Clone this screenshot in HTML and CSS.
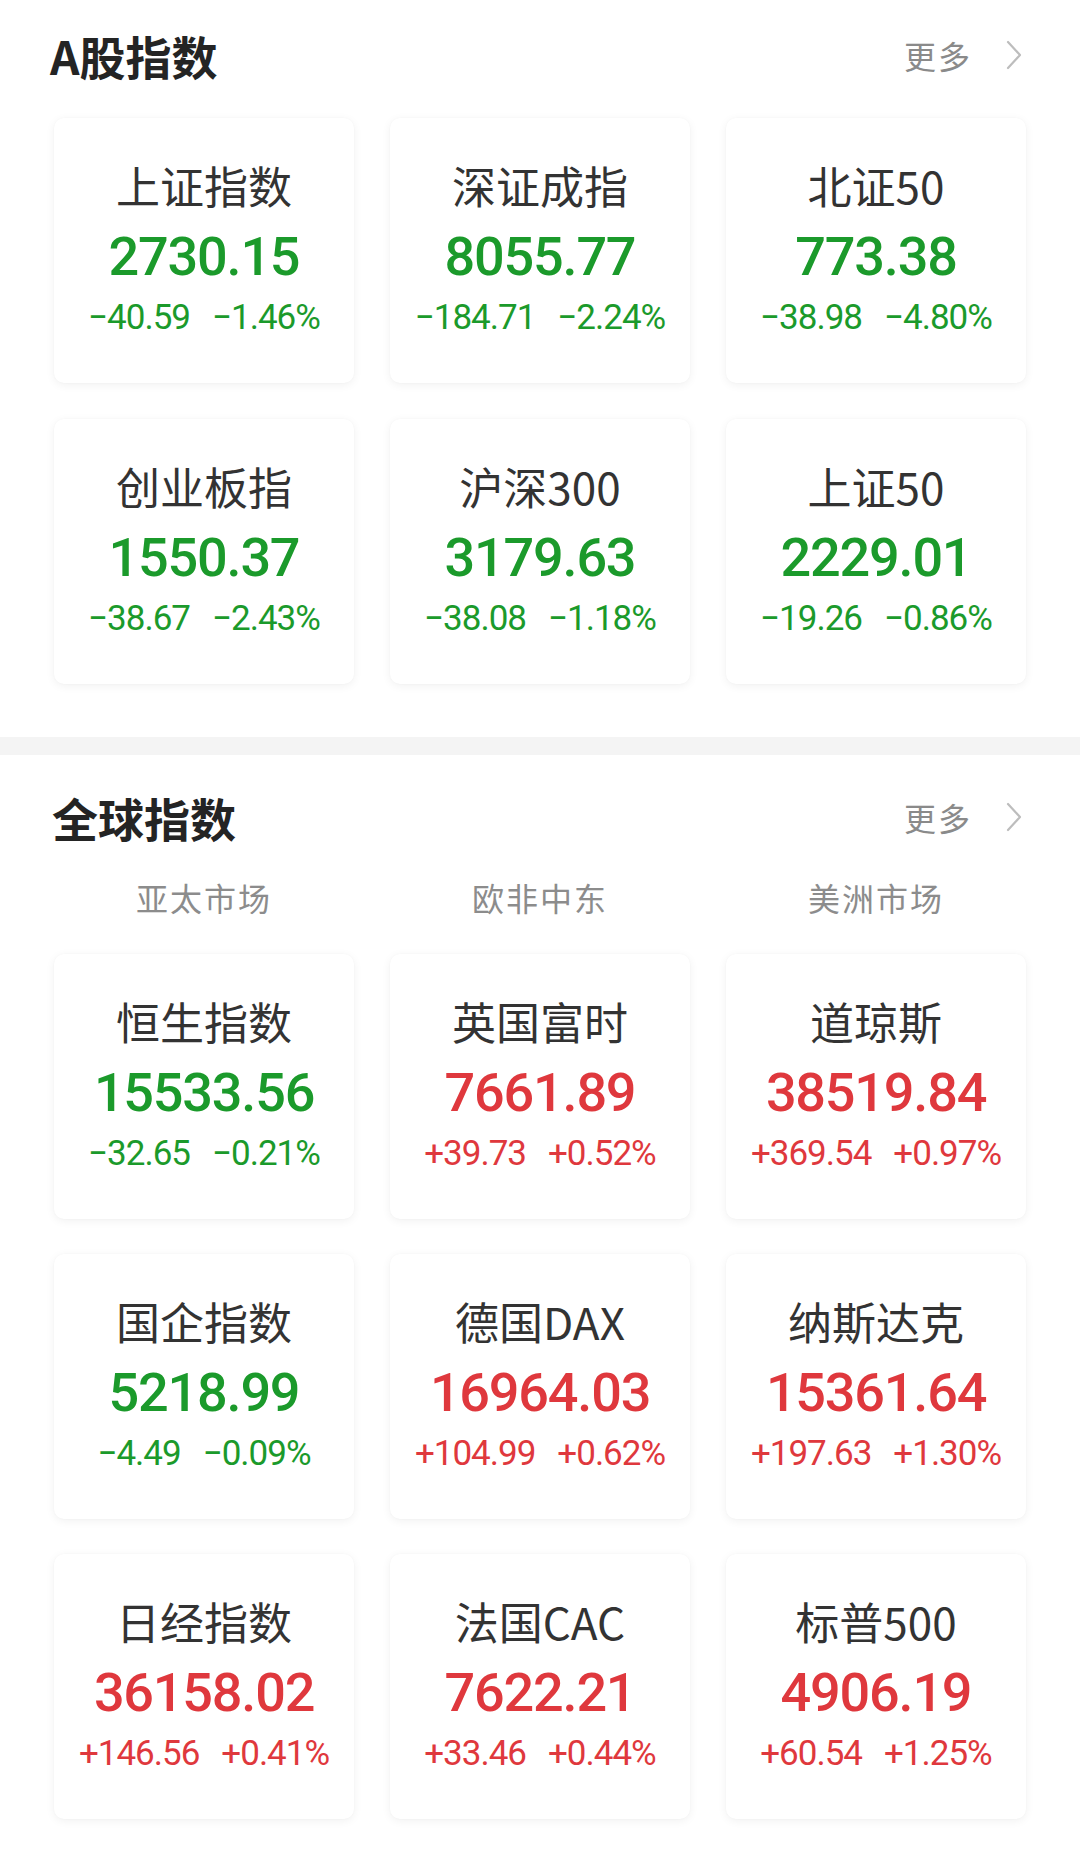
FILE: index.html
```html
<!DOCTYPE html>
<html lang="zh-CN">
<head>
<meta charset="utf-8">
<title>指数</title>
<link rel="stylesheet" href="styles.css">
</head>
<body>
<div class="page">
  <section class="sec sec-a">
    <div class="head">
      <h2 class="title">A股指数</h2>
      <div class="more">更多<svg class="chev" viewBox="0 0 16 30" width="16" height="30"><path d="M2 2 L14 15 L2 28" fill="none" stroke="#bdbdbd" stroke-width="2.2" stroke-linecap="round" stroke-linejoin="round"/></svg></div>
    </div>
    <div class="grid">
      <div class="card down"><div class="name">上证指数</div><div class="val">2730.15</div><div class="chg"><span>−40.59</span><span>−1.46%</span></div></div>
      <div class="card down"><div class="name">深证成指</div><div class="val">8055.77</div><div class="chg"><span>−184.71</span><span>−2.24%</span></div></div>
      <div class="card down"><div class="name">北证50</div><div class="val">773.38</div><div class="chg"><span>−38.98</span><span>−4.80%</span></div></div>
      <div class="card down"><div class="name">创业板指</div><div class="val">1550.37</div><div class="chg"><span>−38.67</span><span>−2.43%</span></div></div>
      <div class="card down"><div class="name">沪深300</div><div class="val">3179.63</div><div class="chg"><span>−38.08</span><span>−1.18%</span></div></div>
      <div class="card down"><div class="name">上证50</div><div class="val">2229.01</div><div class="chg"><span>−19.26</span><span>−0.86%</span></div></div>
    </div>
  </section>
  <div class="band"></div>
  <section class="sec sec-g">
    <div class="head">
      <h2 class="title">全球指数</h2>
      <div class="more">更多<svg class="chev" viewBox="0 0 16 30" width="16" height="30"><path d="M2 2 L14 15 L2 28" fill="none" stroke="#bdbdbd" stroke-width="2.2" stroke-linecap="round" stroke-linejoin="round"/></svg></div>
    </div>
    <div class="tabs">
      <div class="tab">亚太市场</div>
      <div class="tab">欧非中东</div>
      <div class="tab">美洲市场</div>
    </div>
    <div class="grid">
      <div class="card down"><div class="name">恒生指数</div><div class="val">15533.56</div><div class="chg"><span>−32.65</span><span>−0.21%</span></div></div>
      <div class="card up"><div class="name">英国富时</div><div class="val">7661.89</div><div class="chg"><span>+39.73</span><span>+0.52%</span></div></div>
      <div class="card up"><div class="name">道琼斯</div><div class="val">38519.84</div><div class="chg"><span>+369.54</span><span>+0.97%</span></div></div>
      <div class="card down"><div class="name">国企指数</div><div class="val">5218.99</div><div class="chg"><span>−4.49</span><span>−0.09%</span></div></div>
      <div class="card up"><div class="name">德国DAX</div><div class="val">16964.03</div><div class="chg"><span>+104.99</span><span>+0.62%</span></div></div>
      <div class="card up"><div class="name">纳斯达克</div><div class="val">15361.64</div><div class="chg"><span>+197.63</span><span>+1.30%</span></div></div>
      <div class="card up"><div class="name">日经指数</div><div class="val">36158.02</div><div class="chg"><span>+146.56</span><span>+0.41%</span></div></div>
      <div class="card up"><div class="name">法国CAC</div><div class="val">7622.21</div><div class="chg"><span>+33.46</span><span>+0.44%</span></div></div>
      <div class="card up"><div class="name">标普500</div><div class="val">4906.19</div><div class="chg"><span>+60.54</span><span>+1.25%</span></div></div>
    </div>
  </section>
</div>
</body>
</html>
```
FILE: styles.css
```css
html, body {
  margin: 0;
  padding: 0;
  background: #ffffff;
}
body {
  width: 1080px;
  height: 1852px;
  overflow: hidden;
  font-family: "Noto Sans CJK SC", "Noto Sans", sans-serif;
  color: #222;
}
.page {
  display: flex;
  flex-direction: column;
}
.sec {
  display: flex;
  flex-direction: column;
  padding: 0 54px;
}
.head {
  height: 64px;
  display: flex;
  align-items: center;
  justify-content: space-between;
  padding-right: 4px;
}
.sec-a .head { margin-top: 23px; }
.sec-g .head { margin-top: 30px; }
.title {
  margin: 0 0 0 -4px;
  font-size: 46px;
  font-weight: 700;
  color: #242424;
  line-height: 64px;
}
.sec-g .title { margin-left: -2px; }
.more {
  display: flex;
  align-items: center;
  font-size: 32px;
  letter-spacing: 2px;
  color: #8a8a8a;
}
.chev {
  margin-left: 34px;
  display: block;
}
.grid {
  display: grid;
  grid-template-columns: repeat(3, 300px);
  column-gap: 36px;
  row-gap: 36px;
}
.sec-a .grid { margin-top: 31px; }
.sec-g .grid { margin-top: 32px; row-gap: 35px; }
.card {
  height: 265px;
  box-sizing: border-box;
  background: #fff;
  border-radius: 10px;
  box-shadow: 0 2px 10px rgba(0, 0, 0, 0.06), 0 0 2px rgba(0, 0, 0, 0.03);
  display: flex;
  flex-direction: column;
  align-items: center;
  padding-top: 42px;
}
.name {
  font-size: 44px;
  line-height: 50px;
  color: #333;
  white-space: nowrap;
}
.val {
  margin-top: 17px;
  font-family: Roboto, "Liberation Sans", sans-serif;
  font-weight: 500;
  font-size: 54px;
  line-height: 60px;
  letter-spacing: -1.2px;
  white-space: nowrap;
}
.chg {
  margin-top: 11px;
  display: flex;
  gap: 22px;
  font-family: Roboto, "Liberation Sans", sans-serif;
  font-weight: 400;
  font-size: 35px;
  line-height: 40px;
  letter-spacing: -1px;
  white-space: nowrap;
}
.down .val, .down .chg { color: #1b9a2b; }
.up .val, .up .chg { color: #df383d; }
.band {
  margin-top: 53px;
  height: 18px;
  background: #f4f4f4;
}
.tabs {
  margin-top: 23px;
  display: grid;
  grid-template-columns: repeat(3, 300px);
  column-gap: 36px;
  height: 50px;
  align-items: center;
}
.tab {
  text-align: center;
  font-size: 32px;
  letter-spacing: 2px;
  color: #8c8c8c;
  line-height: 50px;
}
```
